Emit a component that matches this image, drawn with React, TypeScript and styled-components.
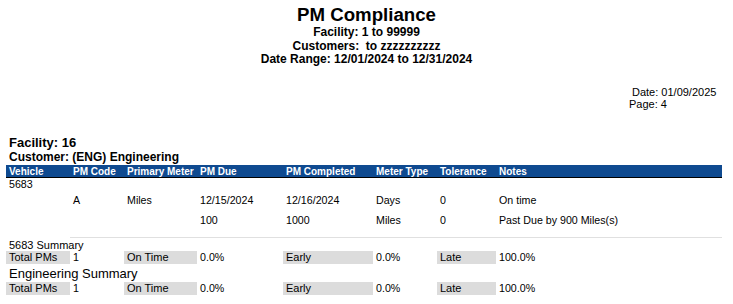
import styled, { createGlobalStyle } from 'styled-components'

const GlobalStyle = createGlobalStyle`
  html, body {
    margin: 0;
    padding: 0;
    background: #fff;
  }
  body {
    font-family: "Liberation Sans", Arial, sans-serif;
    color: #000;
  }
`

// shared column template for the detail table and the summary rows
const COLS = '64px 54px 73px 86px 90px 64px 59px 1fr'

const Page = styled.div`
  width: 733px;
  height: 304px;
  box-sizing: border-box;
  padding: 5px 11px 0 6px;
  display: flex;
  flex-direction: column;
  overflow: hidden;
`

const ReportHeader = styled.div`
  margin: 0 -11px 0 -6px;
  text-align: center;
`

const Title = styled.h1`
  margin: 0 0 1px;
  font-size: 18.67px;
  line-height: 20px;
  font-weight: bold;
`

const SubLine = styled.div`
  font-size: 12px;
  line-height: 13.5px;
  font-weight: bold;
  white-space: pre;
`

const PageInfo = styled.div`
  margin: 19px 0 0 623px;
  display: flex;
  flex-direction: column;
  font-size: 11px;
  line-height: 12px;
`

const InfoLine = styled.div<{ $indent?: number }>`
  padding-left: ${(p) => p.$indent ?? 0}px;
`

const GroupTitle = styled.div<{ $size: number; $gap?: number }>`
  margin-top: ${(p) => p.$gap ?? 0}px;
  padding-left: 3px;
  font-size: ${(p) => p.$size}px;
  line-height: 14px;
  font-weight: bold;
`

const Grid = styled.div`
  display: grid;
  grid-template-columns: ${COLS};
`

const HeaderRow = styled(Grid)`
  margin-top: 1.5px;
  background: #0f4a90;
  border-bottom: 1px solid #000;
`

const HeaderCell = styled.div`
  padding: 1px 0 0 3px;
  font-size: 10px;
  line-height: 11px;
  font-weight: bold;
  color: #fff;
  white-space: nowrap;
`

const DataRow = styled(Grid)<{ $height: number }>`
  height: ${(p) => p.$height}px;
`

const Cell = styled.div`
  padding-left: 3px;
  font-size: 10.67px;
  line-height: 12px;
  white-space: nowrap;
`

const DividerRow = styled(Grid)`
  margin-top: 3px;
`

const Divider = styled.div`
  grid-column: 2 / -1;
  height: 1px;
  background: #e0e0e0;
`

const SummaryTitle = styled.div<{ $size: number; $lh: number; $gap: number }>`
  margin-top: ${(p) => p.$gap}px;
  padding-left: 3px;
  font-size: ${(p) => p.$size}px;
  line-height: ${(p) => p.$lh}px;
`

const SummaryRow = styled(Grid)`
  height: 13px;
`

const SummaryLabel = styled.div`
  background: #dcdcdc;
  padding-left: 3px;
  font-size: 11px;
  line-height: 13px;
  white-space: nowrap;
`

const SummaryValue = styled.div`
  padding-left: 3px;
  font-size: 10.67px;
  line-height: 13px;
  white-space: nowrap;
`

const headers = [
  'Vehicle',
  'PM Code',
  'Primary Meter',
  'PM Due',
  'PM Completed',
  'Meter Type',
  'Tolerance',
  'Notes',
]

const rows = [
  ['', 'A', 'Miles', '12/15/2024', '12/16/2024', 'Days', '0', 'On time'],
  ['', '', '', '100', '1000', 'Miles', '0', 'Past Due by 900 Miles(s)'],
]

const summary = { total: '1', onTime: '0.0%', early: '0.0%', late: '100.0%' }

function Summary() {
  return (
    <SummaryRow>
      <SummaryLabel>Total PMs</SummaryLabel>
      <SummaryValue>{summary.total}</SummaryValue>
      <SummaryLabel>On Time</SummaryLabel>
      <SummaryValue>{summary.onTime}</SummaryValue>
      <SummaryLabel>Early</SummaryLabel>
      <SummaryValue>{summary.early}</SummaryValue>
      <SummaryLabel>Late</SummaryLabel>
      <SummaryValue>{summary.late}</SummaryValue>
    </SummaryRow>
  )
}

export default function App() {
  return (
    <>
      <GlobalStyle />
      <Page>
        <ReportHeader>
          <Title>PM Compliance</Title>
          <SubLine>Facility: 1 to 99999</SubLine>
          <SubLine>Customers:  to zzzzzzzzzz</SubLine>
          <SubLine>Date Range: 12/01/2024 to 12/31/2024</SubLine>
        </ReportHeader>

        <PageInfo>
          <InfoLine $indent={3}>Date: 01/09/2025</InfoLine>
          <InfoLine>Page: 4</InfoLine>
        </PageInfo>

        <GroupTitle $size={13} $gap={26}>Facility: 16</GroupTitle>
        <GroupTitle $size={12}>Customer: (ENG) Engineering</GroupTitle>

        <HeaderRow>
          {headers.map((h) => (
            <HeaderCell key={h}>{h}</HeaderCell>
          ))}
        </HeaderRow>

        <DataRow $height={16}>
          <Cell>5683</Cell>
        </DataRow>
        {rows.map((r, i) => (
          <DataRow key={i} $height={20}>
            {r.map((c, j) => (
              <Cell key={j}>{c}</Cell>
            ))}
          </DataRow>
        ))}

        <DividerRow>
          <Divider />
        </DividerRow>

        <SummaryTitle $size={11} $lh={12} $gap={1}>5683 Summary</SummaryTitle>
        <Summary />
        <SummaryTitle $size={13} $lh={16} $gap={2}>Engineering Summary</SummaryTitle>
        <Summary />
      </Page>
    </>
  )
}
